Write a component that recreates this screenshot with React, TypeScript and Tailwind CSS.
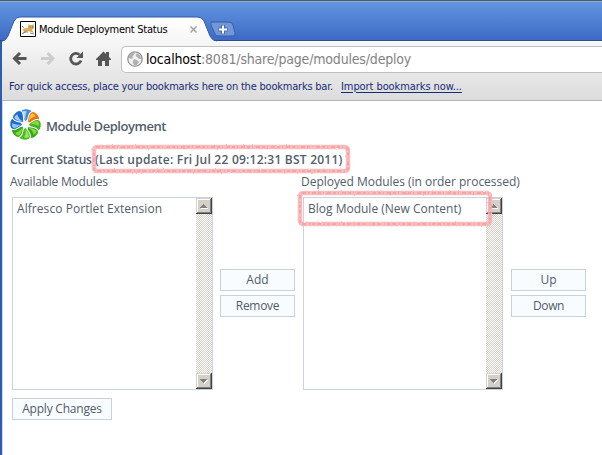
import React from "react";

const ui = "font-['DejaVu_Sans_Condensed','DejaVu_Sans',sans-serif] whitespace-nowrap";
const petals = [
  ["#3c8ce4", "#a8dcfc"],
  ["#f07010", "#ffc83c"],
  ["#3fb81a", "#8cd848"],
  ["#35aa18", "#84d840"],
  ["#48bc20", "#a4e05c"],
  ["#35aa18", "#84d840"],
  ["#2468cc", "#8cc8f4"],
  ["#2468cc", "#94d0f8"],
];

function Petals() {
  return (
    <svg width="33" height="33" viewBox="-16.5 -16.5 33 33" className="-ml-px shrink-0">
      {petals.map(([dark, light], i) => (
        <g key={i} transform={`rotate(${i * 45 + 4})`}>
          <path d="M0-2.500C-2.500-5-6.500-9-5.700-12.500C-5-16.500 4-17 5.700-13C6.500-10 2.500-6 0-2.500Z" fill={dark} stroke="#fff" strokeWidth="1" />
          <path d="M-.3-4.500C-2.500-7-4.500-9.500-4.200-12C-3.500-13.500-1-13.500 .5-13C-1-10-1-8-.3-4.500Z" fill={light} />
        </g>
      ))}
      <circle r="2.800" fill="#fff" />
    </svg>
  );
}

function Cat() {
  return (
    <svg width="16" height="16" viewBox="0 0 16 16" className="shrink-0">
      <path d="M.5.5h15v15H.5z" fill="#fff" stroke="#000" />
      <path d="M2 9L4 7.500L8 7L8.500 3L10 4L12 4L13.500 3L14 7L12 9L14 12L11 11L8 10L5 12L2 13L4 10Z" fill="#d9ac5c" />
      <path d="M2 5L4 6.500M2 13L5 11L8 11M10 12L14 13" stroke="#8b8678" fill="none" />
      <path d="M9.500 6h1M12 6h1" stroke="#7a5420" />
    </svg>
  );
}

function ScrollButton({ down = false }: { down?: boolean }) {
  return (
    <svg width="16" height="16" viewBox="0 0 16 16" shapeRendering="crispEdges" className="shrink-0">
      <path d="M0 0h16v16H0z" fill="#404040" />
      <path d="M0 0h15v15H0z" fill="#d4d0c8" />
      <path d="M1 14V1h13v1H2v12z" fill="#fff" />
      <path d="M14 1v13H1v1h14V1z" fill="#808080" />
      {down ? (
        <>
          <path d="M5 7h7v1h-1v1h-1v1H9v1H8v-1z" fill="#fff" />
          <path d="M4 6h7v1h-1v1H9v1H8v1H7V9H6V8H5V7H4z" fill="#808080" />
        </>
      ) : (
        <>
          <path d="M5 10h7v1H5z" fill="#fff" />
          <path d="M7 6h1v1h1v1h1v1h1v1H4V9h1V8h1V7h1z" fill="#808080" />
        </>
      )}
    </svg>
  );
}

function ListBox({ item, spacing, width }: { item: string; spacing: string; width: string }) {
  return (
    <div className={`flex h-[193px] shrink-0 border border-[#ccd4db] bg-white ${width}`}>
      <div className="flex-1 pl-1 pt-[2px]">
        <Label text={item} className={spacing} />
      </div>
      <div className="flex w-4 flex-col justify-between bg-[repeating-conic-gradient(#d4d0c8_0_25%,#fff_0_50%)] bg-[length:2px_2px]">
        <ScrollButton />
        <ScrollButton down />
      </div>
    </div>
  );
}

function Label({ text, className = "text-[12px]" }: { text: string; className?: string }) {
  return (
    <div className={`whitespace-nowrap font-['Open_Sans',sans-serif] leading-[18px] text-[#515d6b] ${className}`}>
      {text}
    </div>
  );
}

function Button({ text, className = "w-[75px]", spacing = "text-[12px]" }: { text: string; className?: string; spacing?: string }) {
  return (
    <button className={`flex h-[22px] items-center justify-center border border-[#c8d2da] bg-[#f8fcfe] ${className}`}>
      <Label text={text} className={spacing} />
    </button>
  );
}

function Marker({ className, w, h }: { className: string; w: number; h: number }) {
  return (
    <svg width={w} height={h} className={`pointer-events-none absolute ${className}`}>
      <defs>
        <filter id="crayon" x="-5%" y="-15%" width="110%" height="130%">
          <feTurbulence type="fractalNoise" baseFrequency=".35" numOctaves="2" result="n" />
          <feDisplacementMap in="SourceGraphic" in2="n" scale="2" xChannelSelector="R" yChannelSelector="G" />
        </filter>
      </defs>
      <g fill="none" filter="url(#crayon)">
        <rect x="3" y="3" width={w - 6} height={h - 6} rx="3" stroke="#f8b0b4" strokeOpacity=".85" strokeWidth="4.500" />
        <rect x="3" y="3" width={w - 6} height={h - 6} rx="3" stroke="#f08088" strokeOpacity=".4" strokeWidth="2" strokeDasharray="3 2 1 3 4 2" />
      </g>
    </svg>
  );
}

export default function App() {
  return (
    <div className="relative h-[455px] w-[602px] overflow-hidden bg-white">
      <header className="relative h-[41px] border-t border-[#56585c] bg-linear-to-b from-[#6496e0] to-[#3c69c4]">
        <div className="absolute inset-x-0 bottom-0 h-px bg-[#2c4f94]" />
        <div className="absolute inset-x-0 top-0 h-px bg-[#86abe5]" />
        <svg width="240" height="26" viewBox="0 0 240 26" className="absolute left-0 top-[15px]">
          <defs>
            <linearGradient id="tab" x1="0" y1="0" x2="0" y2="1">
              <stop offset="0" stopColor="#fff" />
              <stop offset="1" stopColor="#f6f6f7" />
            </linearGradient>
          </defs>
          <path d="M212 6H229Q232 6 233 9L235 17Q236 20 233 20H219Q216 20 215 18L211 9Q210 6 212 6Z" fill="#7396d8" stroke="#355fa9" />
          <path d="M218.500 13.500h9M223 9v9" stroke="#456bb0" strokeWidth="4" />
          <path d="M219 13.500h8M223 9.500v8" stroke="#fff" strokeWidth="2" />
          <path d="M2 26Q6 24 8 20L14 5Q16 1 20 1H197Q202 1 204 5L210 20Q212 24 216 25.500V26Z" fill="url(#tab)" stroke="#315aa5" />
          <path d="M2.500 26H216" stroke="#f6f6f7" strokeWidth="2" />
        </svg>
        <div className="relative flex pl-5 pt-5">
          <Cat />
          <span className={`${ui} ml-[3px] w-[151px] pt-px text-[11px] leading-4 tracking-[-0.25px] text-black`}>Module Deployment Status</span>
          <svg width="7" height="7" viewBox="0 0 7 7" className="mt-[5px]"><path d="M.5.5l6 6M6.500.5l-6 6" stroke="#a5a5a5" strokeWidth="1.500" /></svg>
        </div>
      </header>
      <div className="ml-[2px] flex h-[32px] items-center bg-linear-to-b from-[#f7f7f8] to-[#e7e7e7] pl-[10px]">
        <svg width="100" height="20" viewBox="0 0 100 20" className="mt-[3px]">
          <path d="M14.500 9.500H3M8 4L2.500 9.500L8 15" fill="none" stroke="#555" strokeWidth="3" />
          <path d="M29 9.500h11.500M35.500 4l5.500 5.500-5.500 5.500" fill="none" stroke="#cdcdcd" strokeWidth="3" />
          <path d="M67.500 5.700A5.300 5.300 0 1 0 69 11.500" fill="none" stroke="#555" strokeWidth="2.800" />
          <path d="M71 2.500v6.500h-6.500z" fill="#555" />
          <path d="M84 10L91.500 2.500L94 5V3h3v5l2 2v1h-2v6h-4v-5h-3v5h-4v-6h-2z" fill="#555" />
        </svg>
        <div className="ml-[9px] mt-[4px] flex h-[27px] flex-1 items-center rounded-l-[5px] border border-r-0 border-[#bfc1c1] bg-white pl-[5px]">
          <svg width="16" height="16" viewBox="0 0 16 16">
            <circle cx="8" cy="8" r="7.200" fill="#f2f2f2" stroke="#929292" strokeWidth="1.300" />
            <path d="M2 4L5 1.500L8 2L7 4L5.500 5L6 7L4 8L2 7ZM10 2L13 4L14.500 8L12 8L10 6L8.500 5ZM7 8L10 9L12 11L10 14L7 14L5.500 11Z" fill="#b2b2b2" />
          </svg>
          <div className={`${ui} ml-[3px] text-[14px] leading-5 tracking-[-0.18px] text-[#838383]`}><span className="text-black">localhost</span>:8081/share/page/modules/deploy</div>
        </div>
      </div>
      <div className={`${ui} ml-[2px] flex h-[28px] items-center border-b border-[#b2b6c0] bg-linear-to-b from-[#e7e7e7] to-[#dcdcdc] pl-[7px] pt-px text-[11px] text-[#172c76]`}>
        <span className="tracking-[-0.21px]">For quick access, place your bookmarks here on the bookmarks bar.</span>
        <span className="ml-2 tracking-[-0.08px] underline underline-offset-2">Import bookmarks now...</span>
      </div>
      <main className="ml-[2px] h-[354px] border-l border-[#d5dbe4] bg-white pl-[7px] pt-[7px]">
        <div className="flex h-[34px] items-start">
          <Petals />
          <Label text="Module Deployment" className="ml-1 mt-[9px] text-[13px] font-semibold tracking-[-0.45px]" />
        </div>
        <div className="mt-[9px] flex font-semibold">
          <Label text="Current Status" className="w-[85px] text-[12px] tracking-[-0.2px]" />
          <Label text="(Last update: Fri Jul 22 09:12:31 BST 2011)" className="text-[12px] tracking-[0.23px]" />
        </div>
        <div className="mt-[4px] flex">
          <Label text="Available Modules" className="w-[291px] text-[12px] tracking-[-0.22px]" />
          <Label text="Deployed Modules (in order processed)" className="text-[12px] tracking-[-0.03px]" />
        </div>
        <div className="ml-[2px] mt-[6px] flex">
          <ListBox item="Alfresco Portlet Extension" spacing="text-[12px] tracking-[0.06px]" width="w-[201px]" />
          <div className="ml-[7px] mt-[72px] flex w-[83px] flex-col gap-1">
            <Button text="Add" /><Button text="Remove" spacing="text-[12px] tracking-[-0.3px]" />
          </div>
          <ListBox item="Blog Module (New Content)" spacing="text-[12px]" width="w-[200px]" />
          <div className="ml-2 mt-[72px] flex flex-col gap-1">
            <Button text="Up" /><Button text="Down" spacing="text-[12px] tracking-[-0.4px]" />
          </div>
        </div>
        <div className="ml-[2px] mt-2"><Button text="Apply Changes" className="w-[100px]" spacing="text-[12px] tracking-[-0.22px]" /></div>
      </main>
      <div className="absolute left-0 top-[41px] h-[414px] w-[2px] bg-[#2c5db4]" />
      <Marker className="left-[91px] top-[144px]" w={260} h={30} />
      <Marker className="left-[297px] top-[190px]" w={196} h={37} />
    </div>
  );
}
